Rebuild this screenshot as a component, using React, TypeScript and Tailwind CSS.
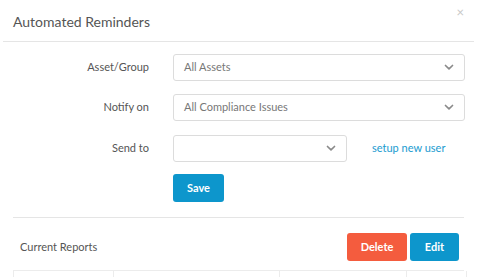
import React from "react";

function Chevron() {
  return (
    <svg width="10" height="7" viewBox="0 0 10 7" fill="none" className="shrink-0">
      <path d="M1.5 1.5 L5 4.8 L8.5 1.5" stroke="#8a8a8a" strokeWidth="1.7" strokeLinecap="round" strokeLinejoin="round" />
    </svg>
  );
}

function SelectBox({ value, className }: { value?: string; className?: string }) {
  return (
    <div
      className={`flex items-center justify-between border border-[#dcdcdc] rounded-[3px] bg-white pl-[10px] pr-[10px] ${className ?? ""}`}
    >
      <span className="text-[11px] text-[#777]">{value ?? ""}</span>
      <Chevron />
    </div>
  );
}

function FormRow({ label, children }: { label: string; children: React.ReactNode }) {
  return (
    <div className="flex items-center">
      <div className="w-[149px] text-right text-[11px] text-[#555]">{label}</div>
      <div className="ml-[24px] flex items-center flex-1">{children}</div>
    </div>
  );
}

export default function App() {
  return (
    <div
      className="w-[477px] h-[277px] bg-white overflow-hidden"
      style={{ fontFamily: 'Lato, "Liberation Sans", sans-serif' }}
    >
      {/* Header */}
      <div className="relative mx-[3px] h-[42px] border-b border-[#e5e5e5] flex items-center pl-[10px]">
        <h1 className="text-[14px] text-[#555] mt-[2px]">Automated Reminders</h1>
        <span className="absolute right-[10px] top-[6px] text-[13px] text-[#c8c8c8] leading-none">×</span>
      </div>

      {/* Form */}
      <div className="pt-[12px] pr-[12px] flex flex-col">
        <FormRow label="Asset/Group">
          <SelectBox value="All Assets" className="w-[292px] h-[27px]" />
        </FormRow>
        <div className="mt-[13px]">
          <FormRow label="Notify on">
            <SelectBox value="All Compliance Issues" className="w-[292px] h-[27px]" />
          </FormRow>
        </div>
        <div className="mt-[14px]">
          <FormRow label="Send to">
            <SelectBox className="w-[174px] h-[27px]" />
            <a className="ml-[25px] text-[11px] text-[#1a9bd0] cursor-pointer">setup new user</a>
          </FormRow>
        </div>
        <div className="mt-[12px] ml-[173px]">
          <button className="w-[51px] h-[28px] rounded-[3px] bg-[#0d96cc] text-white text-[11px] font-bold">
            Save
          </button>
        </div>
      </div>

      {/* Reports */}
      <div className="mx-[13px] mt-[15px] border-t border-[#e5e5e5]">
        <div className="flex items-center justify-between pt-[15px] pl-[7px] pr-[5px]">
          <span className="text-[11px] text-[#555]">Current Reports</span>
          <div className="flex gap-[3px]">
            <button className="w-[60px] h-[28px] rounded-[3px] bg-[#f45c3e] text-white text-[11px] font-bold">
              Delete
            </button>
            <button className="w-[49px] h-[28px] rounded-[3px] bg-[#0d96cc] text-white text-[11px] font-bold">
              Edit
            </button>
          </div>
        </div>
        <div className="mt-[9px] grid grid-cols-[100px_166px_127px_60px] border-t border-l border-[#ececec] h-[20px]">
          <div className="border-r border-[#ececec]" />
          <div className="border-r border-[#ececec]" />
          <div className="border-r border-[#ececec]" />
          <div className="border-r border-[#ececec]" />
        </div>
      </div>
    </div>
  );
}
